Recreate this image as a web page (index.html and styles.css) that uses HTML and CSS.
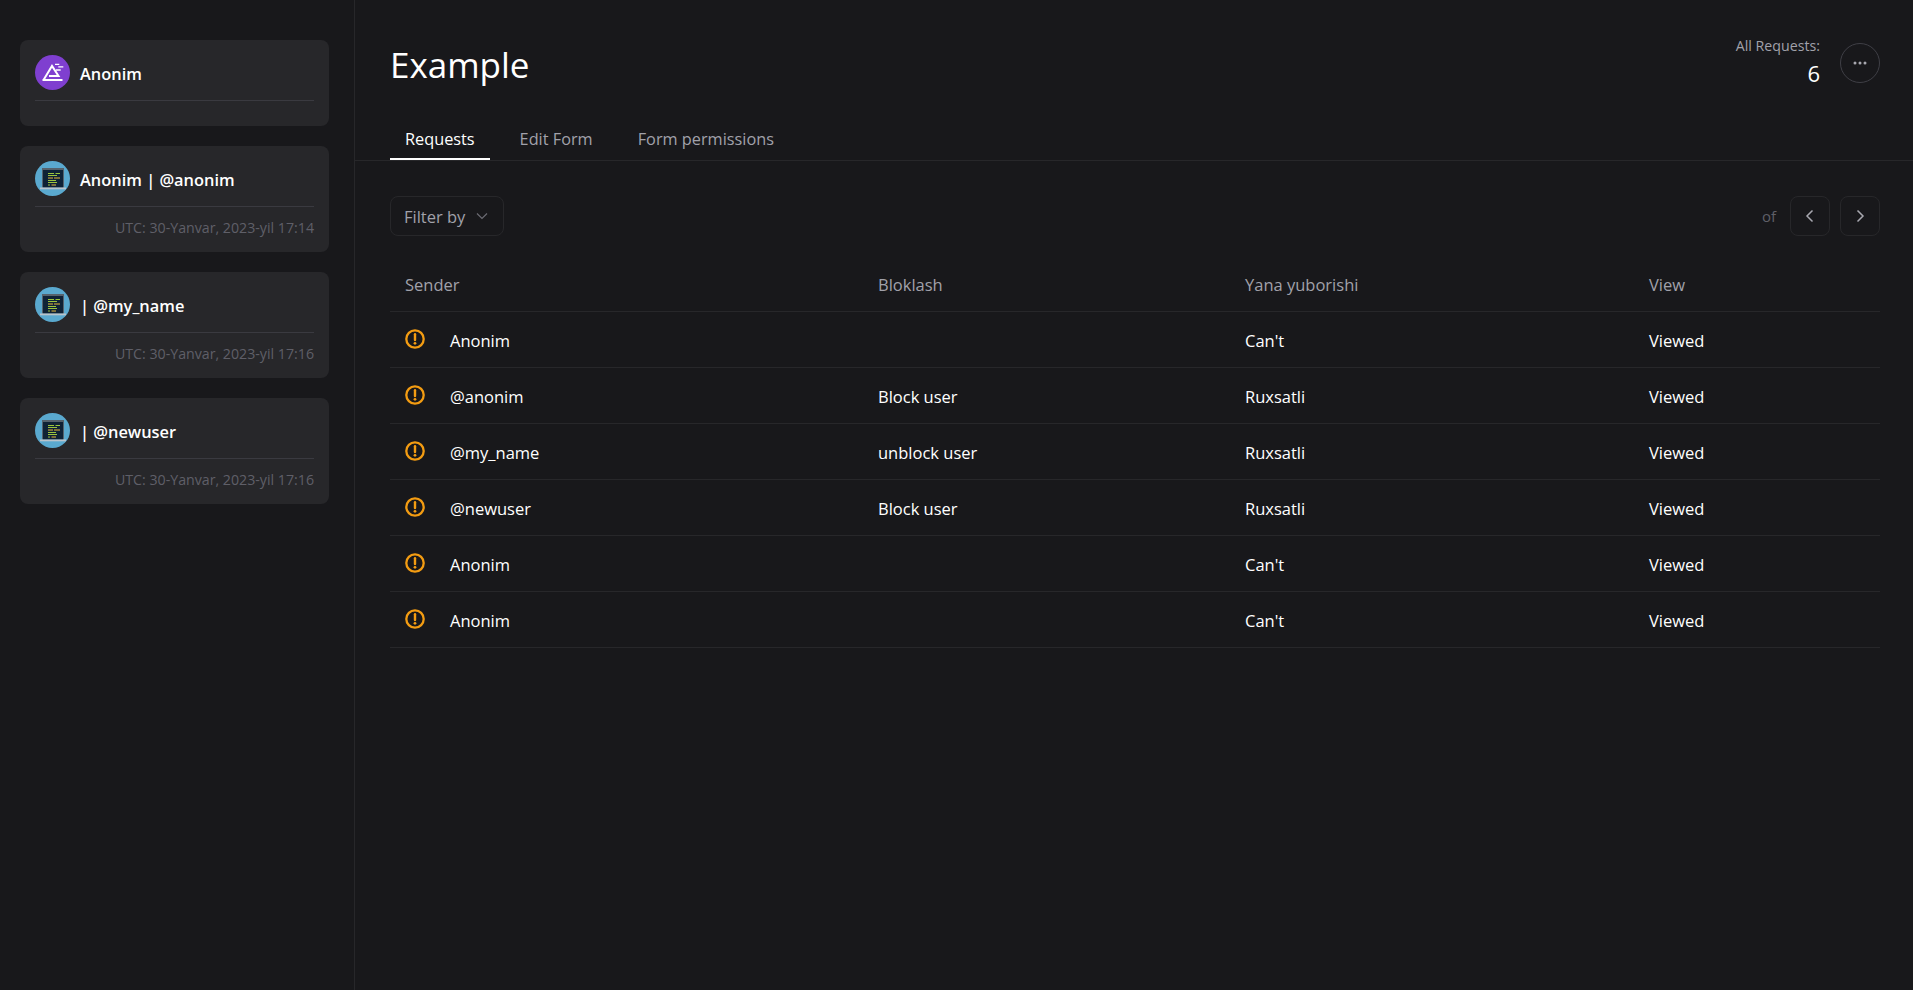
FILE: index.html
```html
<!DOCTYPE html>
<html lang="en">
<head>
    <meta charset="UTF-8">
    <meta name="viewport" content="width=device-width, initial-scale=1.0">
    <title>Example</title>
    <link rel="stylesheet" href="styles.css">
</head>
<body>
    <div class="layout">
        <aside class="sidebar">
            <div class="card">
                <div class="card-head">
                    <svg class="avatar" viewBox="0 0 35 35">
                        <circle cx="17.5" cy="17.5" r="17.5" fill="#7f3fd0"/>
                        <path d="M8.5 25 L17 11 L23.5 21 H14 M7.5 25 H27.5" fill="none" stroke="#fff" stroke-width="2"/>
                        <path d="M20 9.3 H24.3 M23.3 11.9 H28.3 M21 15 H25.7" fill="none" stroke="#fff" stroke-width="1.3"/>
                    </svg>
                    <span class="card-name">Anonim</span>
                </div>
            </div>
            <div class="card">
                <div class="card-head">
                    <svg class="avatar" viewBox="0 0 35 35">
                        <use href="#laptop"/>
                    </svg>
                    <span class="card-name">Anonim | @anonim</span>
                </div>
                <div class="card-date">UTC: 30-Yanvar, 2023-yil 17:14</div>
            </div>
            <div class="card">
                <div class="card-head">
                    <svg class="avatar" viewBox="0 0 35 35">
                        <use href="#laptop"/>
                    </svg>
                    <span class="card-name">| @my_name</span>
                </div>
                <div class="card-date">UTC: 30-Yanvar, 2023-yil 17:16</div>
            </div>
            <div class="card">
                <div class="card-head">
                    <svg class="avatar" viewBox="0 0 35 35">
                        <use href="#laptop"/>
                    </svg>
                    <span class="card-name">| @newuser</span>
                </div>
                <div class="card-date">UTC: 30-Yanvar, 2023-yil 17:16</div>
            </div>
        </aside>

        <main class="content">
            <div class="page-head">
                <h1>Example</h1>
                <div class="page-stats">
                    <div class="stats-text">
                        <div class="stats-label">All Requests:</div>
                        <div class="stats-value">6</div>
                    </div>
                    <button class="more-btn">
                        <svg width="16" height="16" viewBox="0 0 16 16" fill="#a8a8b0">
                            <circle cx="3" cy="8" r="1.5"/>
                            <circle cx="8" cy="8" r="1.5"/>
                            <circle cx="13" cy="8" r="1.5"/>
                        </svg>
                    </button>
                </div>
            </div>

            <nav class="tabs">
                <a class="tab active">Requests</a>
                <a class="tab">Edit Form</a>
                <a class="tab">Form permissions</a>
            </nav>

            <div class="panel">
                <div class="toolbar">
                    <button class="filter-btn">Filter by
                        <svg width="14" height="14" viewBox="0 0 14 14" fill="none" stroke="#6b6b73" stroke-width="1.2">
                            <path d="M2 4.5 L7 9.5 L12 4.5"/>
                        </svg>
                    </button>
                    <div class="pager">
                        <span class="pager-of">of</span>
                        <button class="pager-btn">
                            <svg width="14" height="14" viewBox="0 0 14 14" fill="none" stroke="#a8a8b0" stroke-width="1.5">
                                <path d="M9.5 1.5 L4 7 L9.5 12.5"/>
                            </svg>
                        </button>
                        <button class="pager-btn">
                            <svg width="14" height="14" viewBox="0 0 14 14" fill="none" stroke="#a8a8b0" stroke-width="1.5">
                                <path d="M4.5 1.5 L10 7 L4.5 12.5"/>
                            </svg>
                        </button>
                    </div>
                </div>

                <table class="requests">
                    <colgroup>
                        <col class="col-sender">
                        <col class="col-block">
                        <col class="col-reply">
                        <col class="col-view">
                    </colgroup>
                    <thead>
                        <tr><th>Sender</th><th>Bloklash</th><th>Yana yuborishi</th><th>View</th></tr>
                    </thead>
                    <tbody id="rows"></tbody>
                </table>
            </div>
        </main>
    </div>

    <svg class="defs" width="0" height="0">
        <symbol id="laptop" viewBox="0 0 35 35">
            <circle cx="17.5" cy="17.5" r="17.5" fill="#5aa9cf"/>
            <rect x="7" y="7" width="22" height="19.5" fill="#56626c"/>
            <rect x="8" y="9" width="20" height="17.5" fill="#0f2236"/>
            <path d="M13 12.5 H19 M20.5 12.5 H25 M13 14.5 H22 M13 19.5 H21 M13 21.5 H22 M13 24 H15" stroke="#9bc53d" stroke-width="1"/>
            <path d="M13 17 H18 M19 17 H25 M16.5 24 H21" stroke="#e8b93c" stroke-width="1"/>
            <rect x="5" y="26.5" width="26" height="1.8" fill="#b9c4cc"/>
        </symbol>
    </svg>

    <script>
        const rows = [
            ['Anonim', '', "Can't", 'Viewed'],
            ['@anonim', 'Block user', 'Ruxsatli', 'Viewed'],
            ['@my_name', 'unblock user', 'Ruxsatli', 'Viewed'],
            ['@newuser', 'Block user', 'Ruxsatli', 'Viewed'],
            ['Anonim', '', "Can't", 'Viewed'],
            ['Anonim', '', "Can't", 'Viewed']
        ];
        const warnIcon = '<svg class="warn" width="20" height="20" viewBox="0 0 20 20" fill="none">' +
            '<circle cx="10" cy="10" r="8.7" stroke="#f39c12" stroke-width="2.3"/>' +
            '<path d="M10 5.2 V11" stroke="#f39c12" stroke-width="2.4" stroke-linecap="round"/>' +
            '<circle cx="10" cy="14.3" r="1.4" fill="#f39c12"/></svg>';
        const tbody = document.getElementById('rows');
        rows.forEach(r => {
            const tr = document.createElement('tr');
            tr.innerHTML = `<td><div class="sender">${warnIcon}<span>${r[0]}</span></div></td><td>${r[1]}</td><td>${r[2]}</td><td>${r[3]}</td>`;
            tbody.appendChild(tr);
        });
    </script>
</body>
</html>
```

FILE: styles.css
```css
* {
    box-sizing: border-box;
}
body {
    margin: 0;
    background-color: #18181b;
    color: #fff;
    font-family: 'Open Sans', 'Noto Sans', sans-serif;
    font-size: 16.5px;
}
button {
    font-family: inherit;
    background: none;
    cursor: pointer;
}
.defs {
    position: absolute;
}
.layout {
    display: flex;
    min-height: 990px;
}
.sidebar {
    width: 355px;
    flex-shrink: 0;
    padding: 40px 25px 0 20px;
    border-right: 1px solid #27272a;
    display: flex;
    flex-direction: column;
    gap: 20px;
}
.card {
    background-color: #27272a;
    border-radius: 8px;
    padding: 15px;
    min-height: 86px;
}
.card-head {
    display: flex;
    align-items: center;
    gap: 10px;
    height: 46px;
    padding-bottom: 10px;
    border-bottom: 1px solid #3a3a40;
}
.avatar {
    width: 35px;
    height: 35px;
    flex-shrink: 0;
}
.card-name {
    font-size: 16.4px;
    font-weight: 600;
    line-height: 24px;
    padding-top: 2px;
}
.card-date {
    margin-top: 11px;
    text-align: right;
    font-size: 14.2px;
    line-height: 19px;
    color: #5f5f68;
}
.content {
    flex: 1;
    min-width: 0;
}
.page-head {
    display: flex;
    justify-content: space-between;
    padding: 36px 33px 0 35px;
    height: 120px;
}
h1 {
    margin: 4px 0 0;
    font-size: 35px;
    font-weight: 400;
    line-height: 50px;
}
.page-stats {
    display: flex;
    align-items: flex-start;
    gap: 20px;
}
.stats-text {
    text-align: right;
}
.stats-label {
    font-size: 14.2px;
    line-height: 20px;
    color: #a1a1aa;
}
.stats-value {
    margin-top: 2px;
    font-size: 22px;
    line-height: 30px;
}
.more-btn {
    width: 40px;
    height: 40px;
    margin-top: 7px;
    border: 1px solid #3f3f46;
    border-radius: 50%;
    display: flex;
    align-items: center;
    justify-content: center;
    padding: 0;
}
.tabs {
    display: flex;
    gap: 30px;
    padding: 0 35px;
    height: 41px;
    border-bottom: 1px solid #27272a;
    font-size: 16.3px;
}
.tab {
    padding: 0 15px;
    height: 40px;
    line-height: 38px;
    color: #a1a1aa;
}
.tab + .tab {
    padding: 0;
    margin-right: 15px;
}
.tab.active {
    color: #fff;
    border-bottom: 2px solid #fff;
}
.panel {
    padding: 35px 33px 0 35px;
}
.toolbar {
    display: flex;
    justify-content: space-between;
    align-items: center;
    height: 40px;
}
.filter-btn {
    display: flex;
    align-items: center;
    gap: 10px;
    height: 40px;
    padding: 0 14px 0 13px;
    border: 1px solid #27272a;
    border-radius: 8px;
    color: #a1a1aa;
    font-size: 16.5px;
}
.pager {
    display: flex;
    align-items: center;
    gap: 10px;
}
.pager-of {
    color: #5f5f68;
    font-size: 15px;
    margin-right: 4px;
}
.pager-btn {
    width: 40px;
    height: 40px;
    border: 1px solid #27272a;
    border-radius: 8px;
    display: flex;
    align-items: center;
    justify-content: center;
    padding: 0;
}
.requests {
    width: 100%;
    margin-top: 15px;
    border-collapse: collapse;
    table-layout: fixed;
}
.col-sender { width: 473px; }
.col-block { width: 367px; }
.col-reply { width: 404px; }
.requests th {
    height: 60px;
    padding: 7px 15px 0;
    text-align: left;
    font-weight: 400;
    color: #a1a1aa;
    border-bottom: 1px solid #27272a;
}
.requests td {
    height: 56px;
    padding: 2px 15px 0;
    border-bottom: 1px solid #27272a;
}
.sender {
    display: flex;
    align-items: center;
    gap: 25px;
}
.warn {
    flex-shrink: 0;
    margin-top: -3px;
}
```
